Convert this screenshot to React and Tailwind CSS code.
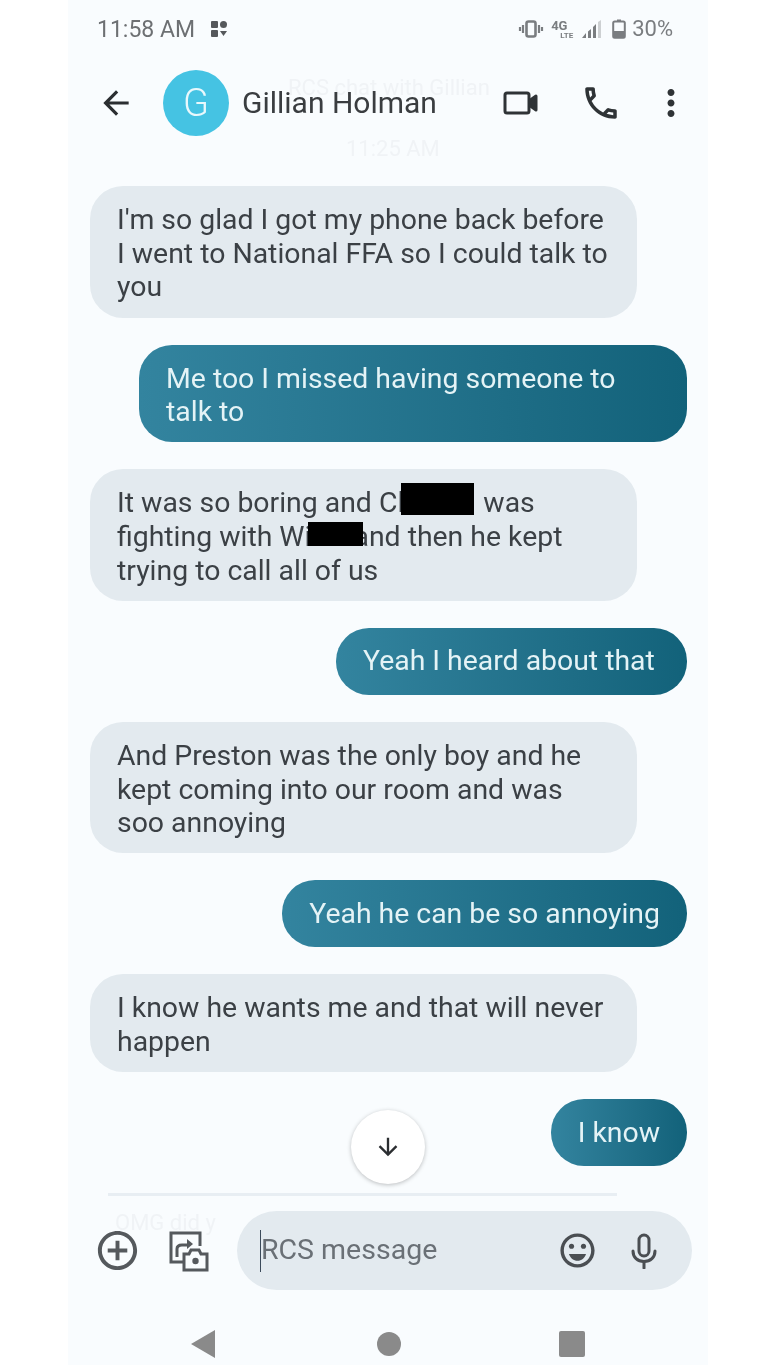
import { MdArrowBack, MdOutlineCall, MdMoreVert, MdAddCircleOutline, MdOutlineEmojiEmotions, MdArrowDownward } from 'react-icons/md';

const received = 'w-[547px] self-start rounded-[33px] bg-[#e3eaef] pl-[27px] pr-3 pt-[17px] pb-[13.4px] text-[#3b4045]';
const sent = 'flex min-h-[67px] items-center self-end rounded-[33px] bg-gradient-to-r from-[#33849f] to-[#12627a] px-[27px] text-[#e4f3f6]';

function StatusIcons() {
  return (
    <div className="flex items-center gap-[7px] text-[#7a7d80]">
      {/* vibrate */}
      <svg width="26" height="20" viewBox="0 0 26 20" fill="none" stroke="currentColor">
        <rect x="8.5" y="2.5" width="9" height="15" rx="2" strokeWidth="2.6" />
        <path d="M5 6v8M2 8v4M21 6v8M24 8v4" strokeWidth="2.2" />
      </svg>
      {/* 4G LTE */}
      <div className="relative w-[22px] h-[24px] font-['Roboto',sans-serif] font-bold leading-none">
        <span className="absolute left-0 top-[2px] text-[13px]">4G</span>
        <span className="absolute right-0 top-[15px] text-[8px]">LTE</span>
      </div>
      {/* signal */}
      <svg width="22" height="20" viewBox="0 0 22 20" fill="currentColor">
        <path d="M21 1v18h-3V3z" fillOpacity="0.35" />
        <path d="M16 5v14h-3V8zM11 10v9H8v-6.5zM6 14v5H2z" />
      </svg>
      {/* battery */}
      <svg width="14" height="20" viewBox="0 0 14 20" fill="none" className="ml-[3px]">
        <path d="M5 0.5h4v2H5z" fill="currentColor" />
        <rect x="1.2" y="2.5" width="11.6" height="16.3" rx="1.5" stroke="currentColor" strokeWidth="2" />
        <rect x="1.2" y="12" width="11.6" height="6.8" fill="currentColor" />
      </svg>
      <span className="text-[22px] leading-none -ml-[1px]">30%</span>
    </div>
  );
}

function GalleryCamera() {
  return (
    <svg width="41" height="42" viewBox="0 0 41 42" fill="none" stroke="#55595d" strokeWidth="3">
      <path d="M16 32H3V3h29v13" />
      <path d="M9 27v-8c0-3 2-4 5-4h7" />
      <path d="M19 9l6 5-6 5z" fill="#55595d" stroke="none" />
      <path d="M16 24h5l2-4h8l2 4h6v16H16z" fill="#f9fcfe" />
      <circle cx="27.5" cy="31" r="3.2" fill="#55595d" stroke="none" />
    </svg>
  );
}

function VideoIcon() {
  return (
    <svg width="36" height="26" viewBox="0 0 36 26" fill="none" stroke="#2f3336" strokeWidth="3" strokeLinejoin="round">
      <rect x="2" y="3" width="24" height="20" rx="2" />
      <path d="M26 11l7-5v14l-7-5" fill="#2f3336" />
    </svg>
  );
}

function MicIcon() {
  return (
    <svg width="28" height="36" viewBox="0 0 28 36" fill="none" stroke="#4a4e52" strokeWidth="3" strokeLinecap="round">
      <rect x="9" y="2" width="10" height="21" rx="5" />
      <path d="M3 18c0 6.500 4.500 10.500 11 10.500S25 24.500 25 18" />
      <path d="M14 29v6" />
    </svg>
  );
}

export default function App() {
  return (
    <div className="h-[1365px] w-full overflow-hidden bg-white font-['Roboto',sans-serif] blur-[0.4px]">
      <div className="relative ml-[68px] flex h-full w-[640px] flex-col bg-[#f9fcfe]">
        {/* status bar */}
        <div className="flex h-[58px] items-center justify-between pl-[29px] pr-[35px] text-[#6d7073]">
          <div className="flex items-center gap-[16px]">
            <span className="text-[23px] leading-none">11:58 AM</span>
            <svg width="16" height="18" viewBox="0 0 16 18" fill="#55585b">
              <rect x="0" y="1" width="7" height="7" rx="1" />
              <circle cx="12.5" cy="4.5" r="3.5" />
              <rect x="0" y="10" width="7" height="7" rx="1" />
              <path d="M9 11h7l-3.500 5z" />
            </svg>
          </div>
          <StatusIcons />
        </div>

        {/* faint text showing through the header and composer */}
        <span className="absolute left-[220px] top-[77px] text-[22px] leading-none text-[#f0f3f6]">RCS chat with Gillian</span>
        <span className="absolute left-[278px] top-[138px] text-[22px] leading-none text-[#f0f3f6]">11:25 AM</span>
        <span className="absolute left-[47px] top-[1212px] text-[22px] leading-none text-[#f0f3f6]">OMG did y</span>

        {/* app bar */}
        <div className="relative flex h-[90px] items-center pl-[29px]">
          <MdArrowBack size={38} className="text-[#2b2e31]" />
          <div className="ml-[28px] flex h-[66px] w-[66px] items-center justify-center rounded-full bg-[#45c3e3] text-[38px] font-light text-[#e9f8fc]">G</div>
          <span className="ml-[13px] w-[261px] text-[30px] leading-none text-[#3a3d40]">Gillian Holman</span>
          <VideoIcon />
          <MdOutlineCall size={42} className="ml-[41px] text-[#2f3336]" />
          <MdMoreVert size={42} className="ml-[28px] text-[#2f3336]" />
        </div>

        {/* messages */}
        <div className="flex flex-col gap-[27px] pl-[22px] pr-[21px] pt-[38px] text-[28.4px] leading-[33.7px]">
          <div className={received}>I'm so glad I got my phone back before<br />I went to National FFA so I could talk to<br />you</div>
          <div className={`${sent} w-[548px] pt-[17px] pb-[13.4px]`}><span>Me too I missed having someone to<br />talk to</span></div>
          <div className={received}>
            It was so boring and Cl<span className="relative -my-[4px] -ml-[3px] mr-[2px] inline-block h-[32px] w-[73px] bg-black align-[1px]" /> was<br />
            fighting with Wi<span className="relative -ml-[3px] -mr-[10px] inline-block h-[24px] w-[55px] bg-black align-baseline" />and then he kept<br />
            trying to call all of us
          </div>
          <div className={`${sent} w-[351px]`}>Yeah I heard about that</div>
          <div className={received}>And Preston was the only boy and he<br />kept coming into our room and was<br />soo annoying</div>
          <div className={sent}>Yeah he can be so annoying</div>
          <div className={received}>I know he wants me and that will never<br />happen</div>
          <div className={sent}>I know</div>
        </div>

        {/* scroll to bottom */}
        <div className="absolute left-[283px] top-[1110px] flex h-[74px] w-[74px] items-center justify-center rounded-full bg-white shadow-[0_1px_4px_rgba(0,0,0,0.25)]">
          <MdArrowDownward size={28} className="text-[#2b2e31]" />
        </div>

        <div className="ml-[40px] mt-[27px] h-[3px] w-[509px] bg-[#e8eef3]" />

        {/* composer */}
        <div className="relative mt-[15px] flex items-center pl-[26px]">
          <MdAddCircleOutline size={47} className="text-[#55595d]" />
          <div className="ml-[27px]"><GalleryCamera /></div>
          <div className="ml-[28px] flex h-[79px] w-[455px] items-center rounded-[40px] bg-[#e3eaef] pl-[23px] pr-[34px]">
            <span className="h-[42px] w-px bg-[#3b4a5a]" />
            <span className="flex-1 text-[28.5px] leading-none text-[#6a7076]">RCS message</span>
            <MdOutlineEmojiEmotions size={41} className="text-[#4a4e52]" />
            <div className="ml-[32px]"><MicIcon /></div>
          </div>
        </div>

        {/* nav bar */}
        <div className="mt-[40px] flex items-center pl-[122px] text-[#8a8a8a]">
          <svg width="26" height="28" viewBox="0 0 26 28" fill="currentColor"><path d="M25 0v28L1 14z" /></svg>
          <span className="ml-[161px] h-[24px] w-[24px] rounded-full bg-[#8a8a8a]" />
          <span className="ml-[158px] h-[26px] w-[26px] rounded-[2px] bg-[#8a8a8a]" />
        </div>
      </div>
    </div>
  );
}
